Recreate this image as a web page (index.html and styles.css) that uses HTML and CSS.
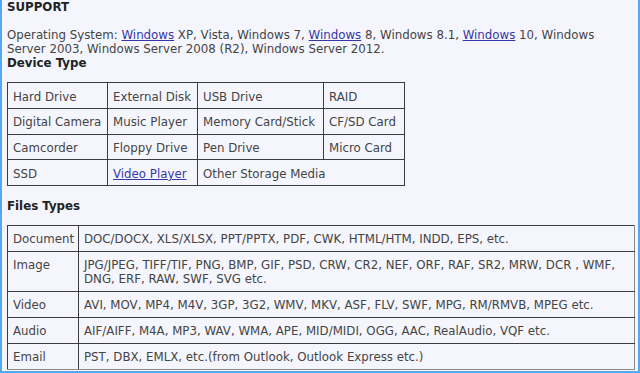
FILE: index.html
```html
<!DOCTYPE html>
<html>
<head>
<meta charset="utf-8">
<link rel="stylesheet" href="styles.css">
</head>
<body>
<div class="frame">
  <div class="heading">SUPPORT</div>
  <p class="os">Operating System: <a href="#">Windows</a> XP, Vista, Windows 7, <a href="#">Windows</a> 8, Windows 8.1, <a href="#">Windows</a> 10, Windows Server 2003, Windows Server 2008 (R2), Windows Server 2012.</p>
  <div class="heading">Device Type</div>
  <table class="grid devices">
    <colgroup><col class="c1"><col class="c2"><col class="c3"><col class="c4"></colgroup>
    <tr><td>Hard Drive</td><td>External Disk</td><td>USB Drive</td><td>RAID</td></tr>
    <tr><td>Digital Camera</td><td>Music Player</td><td>Memory Card/Stick</td><td>CF/SD Card</td></tr>
    <tr><td>Camcorder</td><td>Floppy Drive</td><td>Pen Drive</td><td>Micro Card</td></tr>
    <tr><td>SSD</td><td><a href="#">Video Player</a></td><td colspan="2">Other Storage Media</td></tr>
  </table>
  <div class="heading files-head">Files Types</div>
  <table class="grid files">
    <colgroup><col class="f1"><col class="f2"></colgroup>
    <tr><td>Document</td><td>DOC/DOCX, XLS/XLSX, PPT/PPTX, PDF, CWK, HTML/HTM, INDD, EPS, etc.</td></tr>
    <tr><td>Image</td><td>JPG/JPEG, TIFF/TIF, PNG, BMP, GIF, PSD, CRW, CR2, NEF, ORF, RAF, SR2, MRW, DCR , WMF, DNG, ERF, RAW, SWF, SVG etc.</td></tr>
    <tr><td>Video</td><td>AVI, MOV, MP4, M4V, 3GP, 3G2, WMV, MKV, ASF, FLV, SWF, MPG, RM/RMVB, MPEG etc.</td></tr>
    <tr><td>Audio</td><td>AIF/AIFF, M4A, MP3, WAV, WMA, APE, MID/MIDI, OGG, AAC, RealAudio, VQF etc.</td></tr>
    <tr><td>Email</td><td>PST, DBX, EMLX, etc.(from Outlook, Outlook Express etc.)</td></tr>
  </table>
</div>
</body>
</html>
```
FILE: styles.css
```css
* { box-sizing: border-box; }
html, body { margin: 0; padding: 0; background: #f5f6fd; }
.frame {
  width: 640px;
  height: 373px;
  overflow: hidden;
  border: 2px solid #55a7ef;
  border-top: 0;
  background: #f5f6fd;
  padding: 0 5px;
  font-family: "DejaVu Sans", Verdana, sans-serif;
  font-size: 11.8px;
  line-height: 14px;
  color: #444;
}
.heading {
  font-weight: bold;
  color: #222;
  height: 14px;
}
.os {
  margin: 14px 0 0;
}
a { color: #3636a8; text-decoration: underline; }
.grid {
  border-collapse: collapse;
  table-layout: fixed;
  margin-top: 12px;
}
.grid td {
  border: 1px solid #3c3c3c;
  padding: 6px 5px 5px;
  vertical-align: top;
  line-height: 14px;
}
.devices td { white-space: nowrap; overflow: hidden; padding-top: 6.5px; padding-bottom: 4.25px; }
.devices { width: 397px; }
.c1 { width: 100px; }
.c2 { width: 90px; }
.c3 { width: 126px; }
.c4 { width: 81px; }
.files-head { margin-top: 13px; }
.files { width: 628px; }
.f1 { width: 71px; }
.files td:first-child { white-space: nowrap; }
.files tr:last-child td { border-bottom-color: #8a8a8a; }
.files td:last-child { border-right-color: #8a8a8a; }
```
